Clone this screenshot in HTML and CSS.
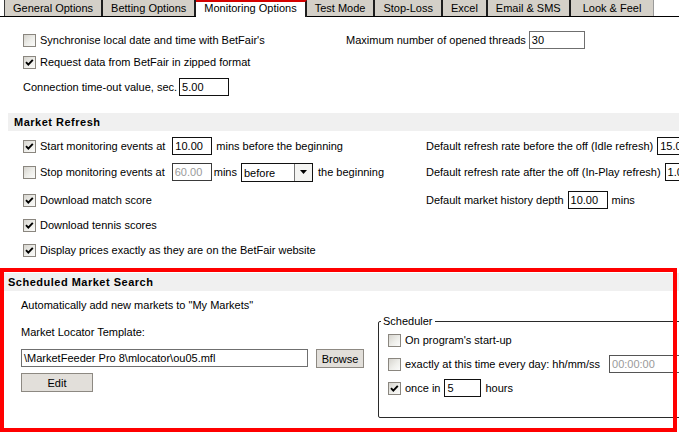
FILE: index.html
```html
<!DOCTYPE html>
<html>
<head>
<meta charset="utf-8">
<link rel="stylesheet" href="styles.css">
</head>
<body>
<nav class="tabs">
  <span class="tab tab-first">General Options</span>
  <span class="tab">Betting Options</span>
  <span class="tab tab-active">Monitoring Options</span>
  <span class="tab">Test Mode</span>
  <span class="tab">Stop-Loss</span>
  <span class="tab">Excel</span>
  <span class="tab">Email &amp; SMS</span>
  <span class="tab tab-last">Look &amp; Feel</span>
</nav>

<section class="general">
  <div class="general-grid">
    <label class="check-row"><span class="cb"></span>Synchronise local date and time with BetFair's</label>
    <div class="field-row">Maximum number of opened threads <span class="field field-grey w-threads">30</span></div>
    <label class="check-row row-2"><span class="cb"><svg class="tick" viewBox="0 0 11 11"><path d="M2 5.2l2.3 2.4L8.8 2.8"/></svg></span>Request data from BetFair in zipped format</label>
    <div class="field-row row-3">Connection time-out value, sec. <span class="field w-timeout">5.00</span></div>
  </div>
</section>

<section class="refresh">
  <h2 class="section-title">Market Refresh</h2>
  <div class="refresh-grid">
    <div class="check-row"><span class="cb"><svg class="tick" viewBox="0 0 11 11"><path d="M2 5.2l2.3 2.4L8.8 2.8"/></svg></span>Start monitoring events at <span class="field w-mins gap-l">10.00</span> mins before the beginning</div>
    <div class="field-row">Default refresh rate before the off (Idle refresh) <span class="field w-mins">15.00</span></div>

    <div class="check-row"><span class="cb"></span>Stop monitoring events at <span class="field field-disabled w-mins gap-l tight-r">60.00</span> mins <span class="select"><span class="select-value">before</span><span class="select-btn"><svg viewBox="0 0 7 4" width="7" height="4"><path d="M0 0h7L3.5 4z"/></svg></span></span> the beginning</div>
    <div class="field-row">Default refresh rate after the off (In-Play refresh) <span class="field w-mins">1.00</span></div>

    <div class="check-row"><span class="cb"><svg class="tick" viewBox="0 0 11 11"><path d="M2 5.2l2.3 2.4L8.8 2.8"/></svg></span>Download match score</div>
    <div class="field-row">Default market history depth <span class="field w-mins">10.00</span> mins</div>

    <div class="check-row grid-full"><span class="cb"><svg class="tick" viewBox="0 0 11 11"><path d="M2 5.2l2.3 2.4L8.8 2.8"/></svg></span>Download tennis scores</div>
    <div class="check-row grid-full"><span class="cb"><svg class="tick" viewBox="0 0 11 11"><path d="M2 5.2l2.3 2.4L8.8 2.8"/></svg></span>Display prices exactly as they are on the BetFair website</div>
  </div>
</section>

<section class="scheduled">
  <h2 class="section-title section-title-flush">Scheduled Market Search</h2>
  <div class="scheduled-body">
    <div class="locator">
      <p class="locator-text">Automatically add new markets to "My Markets"</p>
      <p class="locator-label">Market Locator Template:</p>
      <div class="locator-row">
        <span class="field field-grey w-path">\MarketFeeder Pro 8\mlocator\ou05.mfl</span>
        <span class="button w-browse">Browse</span>
      </div>
      <span class="button w-edit">Edit</span>
    </div>
    <fieldset class="scheduler">
      <legend>Scheduler</legend>
      <div class="check-row"><span class="cb"></span>On program's start-up</div>
      <div class="check-row"><span class="cb"></span>exactly at this time every day: hh/mm/ss <span class="field field-grey field-disabled w-time">00:00:00</span></div>
      <div class="check-row"><span class="cb"><svg class="tick" viewBox="0 0 11 11"><path d="M2 5.2l2.3 2.4L8.8 2.8"/></svg></span>once in <span class="field w-hours">5</span> hours</div>
    </fieldset>
  </div>
</section>

<div class="highlight"></div>
</body>
</html>
```

FILE: styles.css
```css
html, body {
  margin: 0;
  padding: 0;
}

body {
  width: 679px;
  height: 440px;
  overflow: hidden;
  position: relative;
  background: #ffffff;
  color: #000000;
  font-family: "Liberation Sans", Arial, sans-serif;
  font-size: 11px;
  line-height: 14px;
}

/* ---------- tabs ---------- */
.tabs {
  display: flex;
  align-items: flex-start;
  height: 17px;
  box-sizing: border-box;
  border-bottom: 1px solid #000;
  padding-left: 4px;
}

.tab {
  flex: none;
  height: 16px;
  line-height: 16px;
  padding: 0 8px;
  background: #d4d0c8;
  border-right: 2px solid #1e1e1e;
  white-space: nowrap;
}

.tab-first {
  border-left: 1px solid #3a3a3a;
}

.tab-active {
  height: 17px;
  box-sizing: border-box;
  background: #ffffff;
  border-top: 2px solid #d40000;
  line-height: 13px;
  padding-bottom: 2px;
  margin-bottom: -1px;
}

.tab-last {
  border-right: 1px solid #9a9a9a;
  padding: 0 12px 0 12px;
}

/* ---------- shared controls ---------- */
.check-row,
.field-row {
  display: flex;
  align-items: center;
  height: 20px;
  white-space: nowrap;
}

.cb {
  flex: none;
  width: 13px;
  height: 13px;
  box-sizing: border-box;
  border: 1px solid #8a867f;
  background: linear-gradient(135deg, #d6d4ce 0%, #eeeeea 55%, #fbfbfa 100%);
  margin-right: 4px;
  display: flex;
}

.tick {
  width: 11px;
  height: 11px;
}

.tick path {
  fill: none;
  stroke: #000;
  stroke-width: 1.9;
}

.field {
  flex: none;
  height: 18px;
  line-height: 16px;
  box-sizing: border-box;
  border: 1px solid #111;
  padding-left: 2px;
  margin-left: 4px;
  margin-right: 4px;
  background: #fff;
  overflow: hidden;
  white-space: nowrap;
}

.gap-l {
  margin-left: 7px;
}

.tight-r {
  margin-right: 2px;
}

.field-grey {
  border-color: #6f6f6f;
}

.field-disabled {
  color: #9a9a9a;
  border-color: #3a3a3a;
}

.w-threads { width: 56px; margin-left: 3px; }
.w-timeout { width: 50px; margin-left: 2px; }
.w-mins { width: 40px; }
.w-path { width: 287px; margin-left: 0; }
.w-time { width: 80px; margin-left: 9px; border-color: #555; }
.w-hours { width: 37px; }

.select {
  flex: none;
  display: flex;
  width: 72px;
  height: 19px;
  box-sizing: border-box;
  border: 1px solid #111;
  margin-left: 4px;
  margin-right: 5px;
}

.select-value {
  flex: 1;
  padding-left: 2px;
  line-height: 18px;
}

.select-btn {
  width: 17px;
  border-left: 1px solid #777;
  background: #f4f4f2;
  display: flex;
  align-items: center;
  justify-content: center;
}

.button {
  display: flex;
  align-items: center;
  justify-content: center;
  height: 19px;
  box-sizing: border-box;
  border: 1px solid #8d8982;
  background: #e2dfda;
}

.w-browse { width: 48px; margin-left: 4px; }
.w-edit { width: 72px; margin-top: 5px; }

/* ---------- general section ---------- */
.general {
  padding: 13px 0 0 23px;
}

.general-grid {
  display: grid;
  grid-template-columns: 323px auto;
  align-items: center;
}

.general-grid .row-2 {
  grid-column: 1 / 3;
  margin-top: 2px;
}

.general-grid .row-3 {
  grid-column: 1 / 3;
  margin-top: 5px;
}

/* ---------- section titles ---------- */
.section-title {
  margin: 0 0 0 8px;
  height: 18px;
  line-height: 18px;
  background: #f0f0f0;
  font-size: 11px;
  font-weight: bold;
  letter-spacing: 0.5px;
  padding-left: 6px;
}

.section-title-flush {
  margin-left: 2px;
}

/* ---------- market refresh ---------- */
.refresh {
  margin-top: 16px;
}

.refresh-grid {
  display: grid;
  grid-template-columns: 403px auto;
  grid-template-rows: 20px 26px 28px 25px 25px;
  align-items: end;
  padding: 5px 0 0 23px;
}

.refresh-grid .grid-full {
  grid-column: 1 / 3;
}

/* ---------- scheduled search ---------- */
.scheduled {
  margin-top: 13px;
}

.scheduled-body {
  display: flex;
  align-items: flex-start;
  padding-left: 21px;
}

.locator {
  flex: none;
  width: 357px;
  padding-top: 7px;
}

.locator p {
  margin: 0;
  white-space: nowrap;
}

.locator .locator-label {
  margin-top: 13px;
}

.locator-row {
  display: flex;
  align-items: flex-start;
  margin-top: 10px;
}

.scheduler {
  flex: none;
  width: 320px;
  margin: 23px 0 0 0;
  padding: 2px 0 19px 9px;
  border: 1px solid #2a2a2a;
  border-radius: 2px;
}

.scheduler legend {
  padding: 0 2px;
  margin-left: -7px;
  line-height: 14px;
}

.scheduler .check-row + .check-row {
  margin-top: 4px;
}

/* ---------- annotation overlay ---------- */
.highlight {
  position: absolute;
  left: 0;
  top: 268px;
  width: 677px;
  height: 164px;
  box-sizing: border-box;
  border: 4px solid #ff0000;
  pointer-events: none;
}
```
